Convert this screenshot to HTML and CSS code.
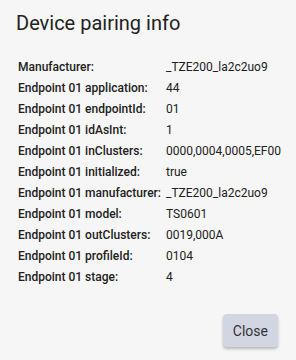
FILE: index.html
```html
<!DOCTYPE html>
<html>
<head>
<meta charset="utf-8">
<link rel="stylesheet" href="styles.css">
</head>
<body>
<div class="dialog">
  <h2 class="title">Device pairing info</h2>
  <table class="info">
    <tr><td class="k">Manufacturer:</td><td class="v">_TZE200_la2c2uo9</td></tr>
    <tr><td class="k">Endpoint 01 application:</td><td class="v">44</td></tr>
    <tr><td class="k">Endpoint 01 endpointId:</td><td class="v">01</td></tr>
    <tr><td class="k">Endpoint 01 idAsInt:</td><td class="v">1</td></tr>
    <tr><td class="k">Endpoint 01 inClusters:</td><td class="v">0000,0004,0005,EF00</td></tr>
    <tr><td class="k">Endpoint 01 initialized:</td><td class="v">true</td></tr>
    <tr><td class="k">Endpoint 01 manufacturer:</td><td class="v">_TZE200_la2c2uo9</td></tr>
    <tr><td class="k">Endpoint 01 model:</td><td class="v">TS0601</td></tr>
    <tr><td class="k">Endpoint 01 outClusters:</td><td class="v">0019,000A</td></tr>
    <tr><td class="k">Endpoint 01 profileId:</td><td class="v">0104</td></tr>
    <tr><td class="k">Endpoint 01 stage:</td><td class="v">4</td></tr>
  </table>
  <div class="actions">
    <button class="btn">Close</button>
  </div>
</div>
</body>
</html>
```
FILE: styles.css
```css
html, body {
  margin: 0;
  padding: 0;
  background: #f6f6f6;
}
body {
  width: 296px;
  height: 360px;
  font-family: Roboto, "Liberation Sans", sans-serif;
  color: #212121;
}
.dialog {
  display: flex;
  flex-direction: column;
  padding: 11px 16px 14px 16px;
}
.title {
  margin: 0;
  font-size: 20px;
  font-weight: 400;
  line-height: 24px;
  color: #222;
}
.info {
  margin-top: 21px;
  border-collapse: collapse;
  font-size: 12px;
}
.info td {
  padding: 0;
  height: 21px;
  vertical-align: middle;
  white-space: nowrap;
}
.k {
  font-weight: 500;
  padding-left: 2px !important;
  padding-right: 5px !important;
}
.v {
  font-weight: 400;
}
.actions {
  display: flex;
  justify-content: flex-end;
  margin-top: 27px;
  padding-right: 2px;
}
.btn {
  font-family: Roboto, "Liberation Sans", sans-serif;
  font-size: 14px;
  color: #333;
  background: #d2d6e2;
  border: none;
  border-radius: 4px;
  height: 33px;
  padding: 0 10px;
  box-shadow: 0 2px 3px rgba(0,0,0,0.25);
}
```
